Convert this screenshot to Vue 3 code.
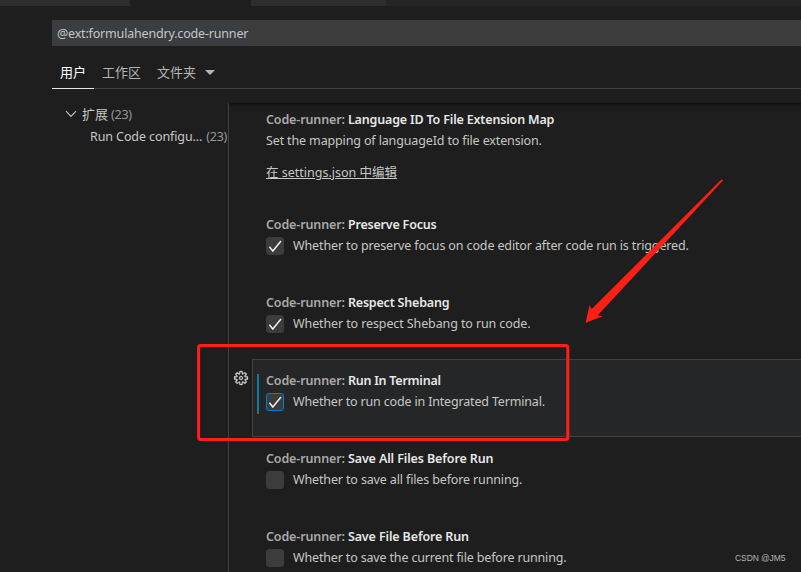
<script setup>
const settings = [
  { name: 'Language ID To File Extension Map', desc: 'Set the mapping of languageId to file extension.', type: 'link', cls: 'w1' },
  { name: 'Preserve Focus', desc: 'Whether to preserve focus on code editor after code run is triggered.', type: 'check', checked: true, cls: 'w2' },
  { name: 'Respect Shebang', desc: 'Whether to respect Shebang to run code.', type: 'check', checked: true, cls: 'w3' },
  { name: 'Run In Terminal', desc: 'Whether to run code in Integrated Terminal.', type: 'check', checked: true, active: true, cls: 'w4' },
  { name: 'Save All Files Before Run', desc: 'Whether to save all files before running.', type: 'check', checked: false, cls: 'w5' },
  { name: 'Save File Before Run', desc: 'Whether to save the current file before running.', type: 'check', checked: false, cls: 'w6' },
]
</script>

<template>
  <div class="editor">
    <div class="tabs">
      <div class="tab first"></div>
      <div class="tab current"></div>
      <div class="tab third"></div>
    </div>
    <div class="search"><span class="query">@ext:formulahendry.code-runner</span></div>
    <nav class="scopes">
      <div class="scope selected">用户</div>
      <div class="scope">工作区</div>
      <div class="scope">文件夹<i class="caret"></i></div>
    </nav>
    <div class="body">
      <aside class="toc">
        <div class="toc-row">
          <svg class="chevron" width="12" height="8" viewBox="0 0 12 8"><path d="M1 1.2 6 6.4 11 1.2" /></svg>
          <span>扩展</span><span class="count">(23)</span>
        </div>
        <div class="toc-row child"><span class="toc-label">Run Code configu...</span><span class="count">(23)</span></div>
      </aside>
      <main class="list">
        <section v-for="s in settings" :key="s.name" class="item" :class="[s.cls, { active: s.active, tall: s.type === 'link' }]">
          <div class="gutter">
            <svg v-if="s.active" width="16" height="16" viewBox="0 0 16 16">
              <path fill="#d0d0d0" stroke="#d0d0d0" stroke-width="0.25" fill-rule="evenodd" d="M9.1 4.4 8.6 2H7.4l-.5 2.4-.7.3-2-1.3-.9.8 1.3 2-.2.7-2.4.5v1.2l2.4.5.3.8-1.3 2 .8.8 2-1.3.8.3.4 2.3h1.2l.5-2.4.8-.3 2 1.3.8-.8-1.3-2 .3-.8 2.3-.4V7.4l-2.4-.5-.3-.8 1.3-2-.8-.8-2 1.3-.7-.2zM9.4 1l.5 2.4L12 2.1l2 2-1.4 2.1 2.4.4v2.8l-2.4.5L14 12l-2 2-2.1-1.4-.5 2.4H6.6l-.5-2.4L4 13.9l-2-2 1.4-2.1L1 9.4V6.6l2.4-.5L2.1 4l2-2 2.1 1.4.4-2.4h2.8zm.6 7c0 1.1-.9 2-2 2s-2-.9-2-2 .9-2 2-2 2 .9 2 2zM8 9c.6 0 1-.4 1-1s-.4-1-1-1-1 .4-1 1 .4 1 1 1z" />
            </svg>
          </div>
          <div class="content">
            <div class="mark"></div>
            <div class="text">
              <div class="title"><span class="cat">Code-runner: </span><span class="name">{{ s.name }}</span></div>
              <div class="row">
                <span v-if="s.type === 'check'" class="box">
                  <svg v-if="s.checked" width="16" height="16" viewBox="0 0 16 16"><path d="M2.4 8.8 5.8 13 14 3" /></svg>
                </span>
                <span class="desc">{{ s.desc }}</span>
              </div>
              <a v-if="s.type === 'link'" class="edit">在 settings.json 中编辑</a>
            </div>
          </div>
        </section>
      </main>
    </div>
    <svg class="annotation" width="801" height="572" viewBox="0 0 801 572">
      <rect x="198.6" y="345.6" width="369.2" height="94" rx="2" fill="none" stroke="#ff2015" stroke-width="3" />
      <path fill="#ff2015" d="M723.2 180.2 721.4 179.6 591.6 309.3 589.6 305 585.6 322.7 602.6 316.3 597.5 315.5Z" />
    </svg>
    <div class="watermark">CSDN @JM5</div>
  </div>
</template>

<style>
body { background: #1e1e1e; overflow: hidden; }
</style>

<style scoped>
.editor {
  position: relative; width: 801px; height: 572px; overflow: hidden; box-sizing: border-box;
  background: #1e1e1e; color: #c6c6c6; display: flex; flex-direction: column;
  font-family: "Noto Sans", "Noto Sans CJK SC", sans-serif; font-size: 12.5px; line-height: 20px;
}
.tabs { height: 6px; flex: none; display: flex; background: #252526; }
.tab { background: #2d2d2d; }
.first { width: 130px; }
.current { width: 121px; background: #1e1e1e; }
.third { width: 135px; }
.search {
  flex: none; margin: 14px 0 0 52px; height: 26px; background: #3c3c3c; padding-left: 5px;
  display: flex; align-items: center; white-space: nowrap;
}
.query { background: #3a3d41; line-height: 18px; letter-spacing: -0.18px; padding-top: 1px; }
.scopes {
  flex: none; margin: 11px 0 0 52px; height: 31px; border-bottom: 1px solid #414141;
  display: flex;
}
.scope {
  height: 29px; padding: 0 8px 2px; box-sizing: content-box; line-height: 28px; font-size: 13px;
  color: #b4b4b4; display: flex; align-items: center; white-space: nowrap;
}
.scope.selected { color: #fff; border-bottom: 1px solid #e7e7e7; }
.caret { margin-left: 9px; border: 5px solid transparent; border-top-color: #b4b4b4; border-bottom: 0; margin-top: 2px; }
.body { flex: 1; min-height: 0; display: flex; padding-top: 14px; }
.toc { width: 228px; flex: none; }
.toc-row { height: 22px; display: flex; align-items: center; padding-left: 65px; white-space: nowrap; font-size: 13px; }
.toc-row.child { padding-left: 90px; padding-top: 1px; font-size: 12.5px; }
.toc-label { letter-spacing: -0.1px; }
.chevron { margin-right: 5px; fill: none; stroke: #c5c5c5; stroke-width: 1.1; }
.count { color: #969696; margin-left: 4px; font-size: 12.5px; letter-spacing: -0.25px; }
.toc-row:first-child .count { margin-left: 3px; padding-top: 1px; }
.list {
  flex: 1; min-width: 0; border-left: 1px solid #414141; overflow: hidden;
  box-shadow: inset 0 5px 4px -4px #0a0a0a;
}
.item { height: 78px; display: flex; }
.item.tall { height: 105px; margin-top: -5px; }
.gutter { width: 23px; flex: none; padding: 11px 0 0 4px; box-sizing: border-box; }
.content { flex: 1; display: flex; box-sizing: border-box; border: 1px solid transparent; border-right: 0; }
.active .content { background: #252627; border-color: #414141; }
.mark { width: 2px; height: 40px; margin: 14px 0 0 4px; }
.active .mark { background: #0c7d9d; }
.text { padding: 10px 0 0 7px; white-space: nowrap; }
.title { height: 21px; line-height: 21px; font-weight: 600; white-space: pre; }
.cat { color: #a9a9a9; letter-spacing: -0.13px; }
.name { color: #e7e7e7; }
.row { height: 21px; display: flex; align-items: center; }
.w1 .name { letter-spacing: -0.17px; }
.w1 .desc { letter-spacing: -0.14px; }
.w2 .name { letter-spacing: -0.2px; }
.w2 .desc { letter-spacing: -0.13px; }
.w3 .name { letter-spacing: -0.2px; }
.w3 .desc { letter-spacing: -0.11px; }
.w4 .name { letter-spacing: -0.24px; }
.w4 .desc { letter-spacing: -0.17px; }
.w5 .name { letter-spacing: -0.12px; }
.w5 .desc { letter-spacing: -0.14px; }
.w6 .name { letter-spacing: -0.13px; }
.w6 .desc { letter-spacing: -0.16px; }
.box {
  width: 18px; height: 18px; margin: 1px 9px 0 0; box-sizing: border-box; border: 1px solid #3c3c3c;
  border-radius: 3px; background: #3c3c3c; display: flex;
}
.active .box { border-color: #007fd4; }
.box path { fill: none; stroke: #f0f0f0; stroke-width: 1.5; }
.edit { display: inline-block; margin-top: 12px; text-decoration: underline; }
.annotation { position: absolute; left: 0; top: 0; }
.watermark {
  position: absolute; left: 735px; top: 551px; font: 8.5px/14px "Liberation Sans", sans-serif;
  color: #b4b4b4; white-space: nowrap; letter-spacing: -0.08px;
}
</style>
